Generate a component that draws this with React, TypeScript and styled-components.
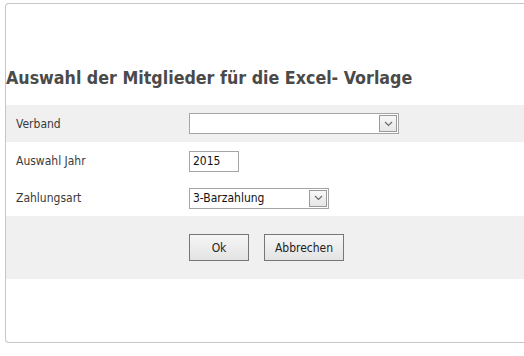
import styled, { createGlobalStyle } from "styled-components"

const Global = createGlobalStyle`
  html, body {
    margin: 0;
    padding: 0;
    background: #fff;
    overflow: hidden;
  }
  body {
    font-family: Tahoma, "DejaVu Sans Condensed", "Liberation Sans", sans-serif;
    font-size: 12px;
    color: #333;
  }
`

const Chevron = () => (
  <svg width="9" height="6" viewBox="0 0 9 6">
    <path d="M1 1 L4.5 4.5 L8 1" fill="none" stroke="#6d6d6d" strokeWidth="1.2" />
  </svg>
)

const Dropdown = ({ width, value }: { width: number; value?: string }) => (
  <SelectBox width={width}>
    <SelectValue>{value}</SelectValue>
    <ArrowButton>
      <Chevron />
    </ArrowButton>
  </SelectBox>
)

const App = () => {
  return <Page>
    <Global />
    <Panel>
      <Title>Auswahl der Mitglieder für die Excel- Vorlage</Title>

      <Row shaded height={37}>
        <Label>Verband</Label>
        <Dropdown width={210} />
      </Row>
      <Row height={38}>
        <Label>Auswahl Jahr</Label>
        <TextInput>2015</TextInput>
      </Row>
      <Row height={36}>
        <Label>Zahlungsart</Label>
        <Dropdown width={140} value="3-Barzahlung" />
      </Row>

      <ButtonBar>
        <Button width={60}>Ok</Button>
        <Button width={80}>Abbrechen</Button>
      </ButtonBar>
    </Panel>
  </Page>
}

const Page = styled.div`
  padding: 3px 0 0 5px;
`

const Panel = styled.div`
  height: 338px;
  border: 1px solid #c6c6c6;
  border-right: none;
  border-radius: 4px 0 0 4px;
  background: #fff;
`

const Title = styled.h1`
  margin: 0;
  padding: 64px 0 0 0;
  height: 37px;
  font-family: Tahoma, "DejaVu Sans Condensed", "DejaVu Sans", sans-serif;
  font-size: 17.7px;
  font-weight: bold;
  color: #4a4a4a;
`

const Row = styled.div<{ shaded?: boolean; height: number }>`
  display: grid;
  grid-template-columns: 183px auto;
  align-items: center;
  height: ${p => p.height}px;
  background: ${p => (p.shaded ? "#f0f0f0" : "#fff")};
`

const Label = styled.div`
  padding-left: 10px;
  color: #3a3a3a;
`

const SelectBox = styled.div<{ width: number }>`
  width: ${p => p.width}px;
  height: 21px;
  box-sizing: border-box;
  border: 1px solid #a5a5a5;
  background: #fff;
  display: flex;
  align-items: center;
  justify-content: space-between;
  padding: 0 1px 0 3px;
`

const SelectValue = styled.span`
  color: #111;
`

const ArrowButton = styled.div`
  width: 18px;
  height: 17px;
  box-sizing: border-box;
  border: 1px solid #9a9a9a;
  background: linear-gradient(#f8f8f8, #e6e6e6);
  display: flex;
  align-items: center;
  justify-content: center;
`

const TextInput = styled.div`
  width: 50px;
  height: 21px;
  box-sizing: border-box;
  border: 1px solid #a5a5a5;
  padding: 0 3px;
  line-height: 19px;
  color: #111;
`

const ButtonBar = styled.div`
  height: 63px;
  background: #f0f0f0;
  display: flex;
  align-items: center;
  gap: 15px;
  padding-left: 183px;
`

const Button = styled.div<{ width: number }>`
  width: ${p => p.width}px;
  height: 27px;
  box-sizing: border-box;
  border: 1px solid #767676;
  background: linear-gradient(#f6f6f6, #e3e3e3);
  display: flex;
  align-items: center;
  justify-content: center;
  color: #222;
`

export default App;
